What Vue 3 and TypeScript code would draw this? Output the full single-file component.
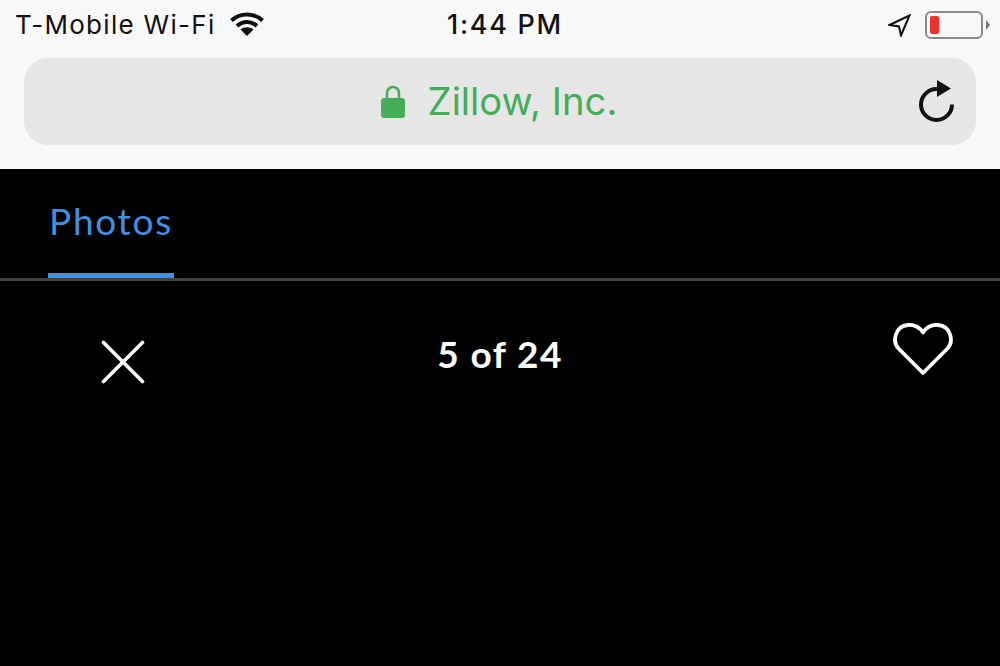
<script setup lang="ts">
const carrier: string = 'T-Mobile Wi-Fi'
const clock: string = '1:44 PM'
const site: string = 'Zillow, Inc.'
const tab: string = 'Photos'
const counter: string = '5 of 24'
</script>

<template>
  <div class="page">
    <header class="chrome">
      <div class="status">
        <div class="status-left">
          <span class="carrier">{{ carrier }}</span>
          <svg class="wifi" width="34" height="24" viewBox="0 0 34 24">
            <path d="M1.500 8.500C10 .5 24 .5 32.500 8.500" fill="none" stroke="#111" stroke-width="4" />
            <path d="M7 14c6-5.500 14-5.500 20 0" fill="none" stroke="#111" stroke-width="4" />
            <path d="M17 24l-6.500-6.500c3.500-3 9.500-3 13 0z" fill="#111" />
          </svg>
        </div>
        <span class="clock">{{ clock }}</span>
        <div class="status-right">
          <svg class="arrow" width="23" height="23" viewBox="0 0 23 23">
            <path d="M21.500 1.500L1.500 11l9.500 1.500L13 21.500z" fill="none" stroke="#111" stroke-width="2" stroke-linejoin="miter" />
          </svg>
          <div class="battery"><div class="charge"></div></div>
          <div class="battery-tip"></div>
        </div>
      </div>
      <div class="url">
        <svg class="lock" width="24" height="33" viewBox="0 0 24 33">
          <path d="M6 14V8a6 6 0 0 1 12 0v6" fill="none" stroke="#43ad57" stroke-width="2.500" />
          <rect x="0" y="13" width="24" height="20" rx="3" fill="#43ad57" />
        </svg>
        <span class="site">{{ site }}</span>
        <svg class="reload" width="38" height="44" viewBox="0 0 38 44">
          <path d="M35 25.500A15.500 15.500 0 1 1 19.500 10H24" fill="none" stroke="#111" stroke-width="4" />
          <path d="M20 1l14 8.500L20 18z" fill="#111" />
        </svg>
      </div>
    </header>

    <main class="viewer">
      <nav class="tabs">
        <div class="tab">{{ tab }}</div>
      </nav>
      <div class="toolbar">
        <svg class="close" width="44" height="44" viewBox="0 0 44 44">
          <path d="M2.500 2.500l39 39M41.500 2.500l-39 39" stroke="#fff" stroke-width="3.600" stroke-linecap="round" fill="none" />
        </svg>
        <span class="counter">{{ counter }}</span>
        <svg class="heart" width="60" height="53" viewBox="0 0 60 53">
          <path d="M30 50L5.500 25.500C-1 18.500 2 3 15 2c7-.5 12 3 15 7.500C33 5 38 1.500 45 2c13 1 16 16.500 9.500 23.500z" fill="none" stroke="#fff" stroke-width="3.800" stroke-linejoin="round" />
        </svg>
      </div>
    </main>
  </div>
</template>

<style>
html, body { margin: 0; background: #000; }
</style>

<style scoped>
.page {
  width: 1000px;
  height: 666px;
  overflow: hidden;
  display: flex;
  flex-direction: column;
  background: #000;
}
.chrome {
  height: 169px;
  flex: none;
  box-sizing: border-box;
  background: #f8f8f8;
  padding: 0 24px;
}
.status {
  position: relative;
  height: 58px;
  margin: 0 -24px;
  padding: 0 10px 0 15px;
  display: flex;
  justify-content: space-between;
  align-items: flex-start;
  color: #111;
}
.status-left {
  display: flex;
  align-items: center;
  height: 50px;
  gap: 14px;
}
.carrier {
  font: 400 26px/50px Inter, sans-serif;
  letter-spacing: 1.3px;
}
.wifi { margin-bottom: 2px; }
.clock {
  font: 500 27px/50px Inter, sans-serif;
  letter-spacing: 1.700px;
  position: absolute;
  left: 447px;
  top: 0;
}
.status-right {
  display: flex;
  align-items: center;
  height: 50px;
}
.arrow { margin-right: 14px; }
.battery {
  box-sizing: border-box;
  width: 58px;
  height: 28px;
  border: 2.500px solid #8a8a8a;
  border-radius: 6px;
  padding: 3px;
}
.charge {
  width: 9px;
  height: 100%;
  background: #f0302a;
  border-radius: 2px;
}
.battery-tip {
  width: 0;
  height: 0;
  margin-left: 3px;
  border-left: 4px solid #777;
  border-top: 5px solid transparent;
  border-bottom: 5px solid transparent;
}
.url {
  position: relative;
  height: 87px;
  border-radius: 24px;
  background: #e6e6e6;
  display: flex;
  justify-content: center;
  align-items: center;
  gap: 23px;
}
.site {
  font: 400 38.200px/1 Inter, sans-serif;
  color: #43ad57;
  margin-right: 2px;
}
.reload {
  position: absolute;
  left: 893px;
  top: 21px;
}
.viewer { flex: 1; background: #000; }
.tabs {
  height: 112px;
  box-sizing: border-box;
  padding-left: 48px;
  border-bottom: 3px solid #444;
}
.tab {
  width: 126px;
  height: 109px;
  box-sizing: border-box;
  border-bottom: 5px solid #4390e1;
  color: #4390e1;
  text-align: center;
  font: 400 37px/104px Lato, sans-serif;
  letter-spacing: 1.700px;
}
.toolbar {
  display: grid;
  grid-template-columns: 1fr auto 1fr;
  align-items: start;
  padding: 42px 47px 0;
}
.close {
  justify-self: start;
  margin: 17px 0 0 54px;
}
.counter {
  color: #fff;
  font: 700 37px/62px Lato, sans-serif;
  letter-spacing: 1.400px;
}
.heart { justify-self: end; }
</style>
